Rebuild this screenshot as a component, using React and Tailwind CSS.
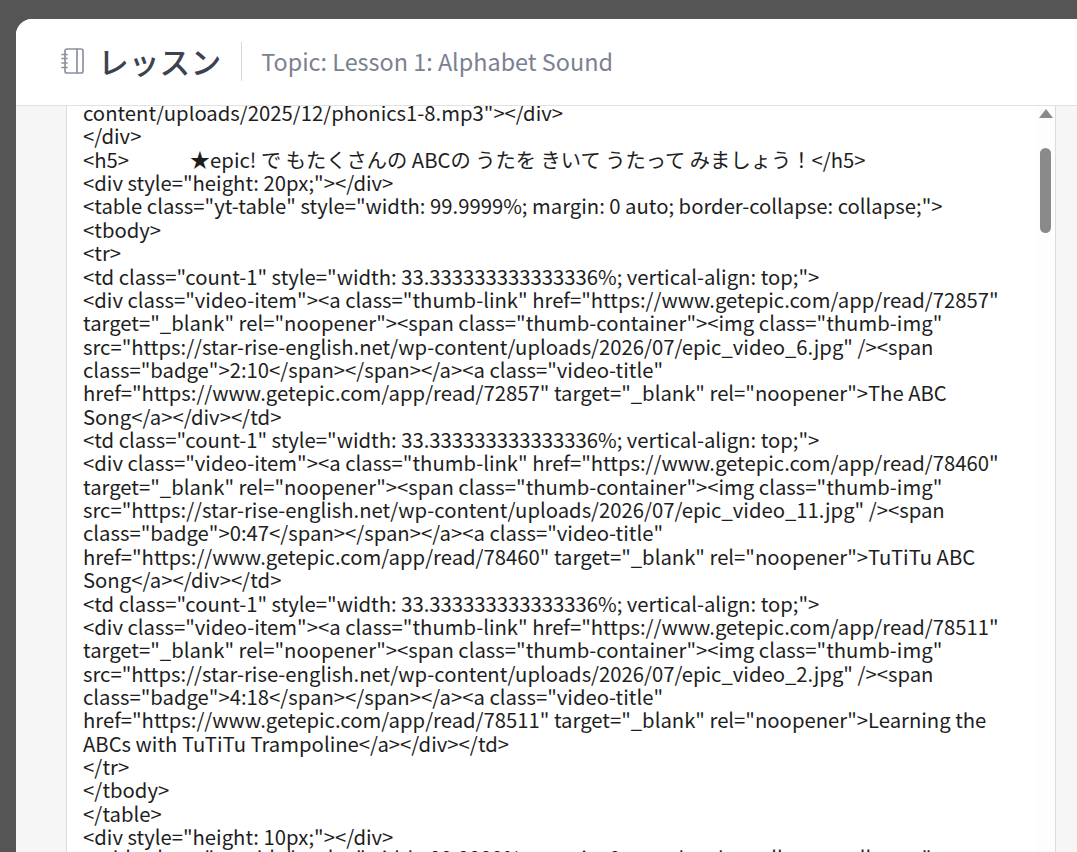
const lines = [
  'content/uploads/2025/12/phonics1-8.mp3"></div>',
  '</div>',
  '<h5>\u3000\u3000\u3000★epic! で もたくさんの ABCの うたを きいて うたって みましょう！</h5>',
  '<div style="height: 20px;"></div>',
  '<table class="yt-table" style="width: 99.9999%; margin: 0 auto; border-collapse: collapse;">',
  '<tbody>',
  '<tr>',
  '<td class="count-1" style="width: 33.333333333333336%; vertical-align: top;">',
  '<div class="video-item"><a class="thumb-link" href="https://www.getepic.com/app/read/72857"',
  'target="_blank" rel="noopener"><span class="thumb-container"><img class="thumb-img"',
  'src="https://star-rise-english.net/wp-content/uploads/2026/07/epic_video_6.jpg" /><span',
  'class="badge">2:10</span></span></a><a class="video-title"',
  'href="https://www.getepic.com/app/read/72857" target="_blank" rel="noopener">The ABC',
  'Song</a></div></td>',
  '<td class="count-1" style="width: 33.333333333333336%; vertical-align: top;">',
  '<div class="video-item"><a class="thumb-link" href="https://www.getepic.com/app/read/78460"',
  'target="_blank" rel="noopener"><span class="thumb-container"><img class="thumb-img"',
  'src="https://star-rise-english.net/wp-content/uploads/2026/07/epic_video_11.jpg" /><span',
  'class="badge">0:47</span></span></a><a class="video-title"',
  'href="https://www.getepic.com/app/read/78460" target="_blank" rel="noopener">TuTiTu ABC',
  'Song</a></div></td>',
  '<td class="count-1" style="width: 33.333333333333336%; vertical-align: top;">',
  '<div class="video-item"><a class="thumb-link" href="https://www.getepic.com/app/read/78511"',
  'target="_blank" rel="noopener"><span class="thumb-container"><img class="thumb-img"',
  'src="https://star-rise-english.net/wp-content/uploads/2026/07/epic_video_2.jpg" /><span',
  'class="badge">4:18</span></span></a><a class="video-title"',
  'href="https://www.getepic.com/app/read/78511" target="_blank" rel="noopener">Learning the',
  'ABCs with TuTiTu Trampoline</a></div></td>',
  '</tr>',
  '</tbody>',
  '</table>',
  '<div style="height: 10px;"></div>',
];
const lastLine = '<table class="yt-table" style="width: 99.9999%; margin: 0 auto; border-collapse: collapse;">';

export default function App() {
  return (
    <div className="h-[852px] w-[1077px] overflow-hidden bg-[#555555] pt-[19px] pl-4 font-['Noto_Sans_CJK_JP','Noto_Sans',sans-serif]">
      <div className="flex h-[833px] w-[1061px] flex-col overflow-hidden rounded-tl-2xl bg-white">
        <header className="flex h-[87px] shrink-0 items-center border-b border-[#e2e2e2] bg-white pb-0.5 pl-[44px]">
          <svg width="25" height="28" viewBox="0 0 25 28" fill="none" stroke="#8d92a0" strokeWidth="1.7" strokeLinecap="round" strokeLinejoin="round" className="mr-[13px]">
            <rect x="5" y="2" width="18" height="24" rx="2" />
            <path d="M17 2v24M2 7.5h5M2 11.5h5M2 16h5M2 20.5h5" />
          </svg>
          <h1 className="text-[30.8px] leading-none font-medium whitespace-nowrap text-[#3d4250]">レッスン</h1>
          <div className="mr-[19px] ml-[20px] h-[39px] w-px bg-[#d5d6da]" />
          <p className="mt-0.5 text-[23.4px] leading-none whitespace-nowrap text-[#7b8191]">Topic: Lesson 1: Alphabet Sound</p>
        </header>
        <main className="flex min-h-0 flex-1 bg-[#f6f6f6] pr-[21px] pl-[50px]">
          <div className="relative w-[990px] overflow-hidden border-x border-[#dcdcdc] bg-white">
            <pre className="-mt-[5px] pl-[16px] font-['Noto_Sans_CJK_JP','Noto_Sans',sans-serif] text-[20.28px] leading-[23.36px] whitespace-pre text-[#1e1e1e]">
              {lines.join('\n')}
              <span className="-mt-[3px] block">{lastLine}</span>
            </pre>
            <div className="absolute top-0 right-0 bottom-0 flex w-[19px] justify-center bg-[#fdfdfd]">
              <div className="absolute top-[3px] h-0 w-0 border-x-[7px] border-b-[9px] border-x-transparent border-b-[#8a8a8a]" />
              <div className="absolute top-[42px] h-[85px] w-[11px] rounded-full bg-[#8a8a8a]" />
            </div>
          </div>
        </main>
      </div>
    </div>
  );
}
